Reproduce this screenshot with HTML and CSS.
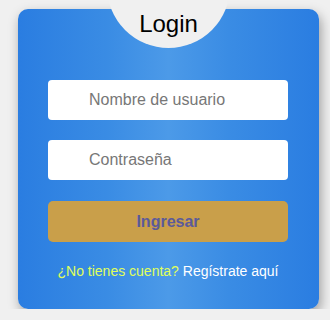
FILE: index.html
```html
<!DOCTYPE html>
<html lang="es">
<head>
<meta charset="utf-8">
<title>Login</title>
<link rel="stylesheet" href="styles.css">
</head>
<body>
<div class="card">
  <div class="badge"><h1 class="title">Login</h1></div>
  <form class="form">
    <input class="field" type="text" placeholder="Nombre de usuario">
    <input class="field" type="password" placeholder="Contraseña">
    <button class="submit" type="button">Ingresar</button>
    <p class="signup"><span class="ask">¿No tienes cuenta?</span> <a class="link" href="#">Regístrate aquí</a></p>
  </form>
</div>
</body>
</html>
```
FILE: styles.css
```css
html, body {
  margin: 0;
  padding: 0;
  background: #f0f0f0;
  font-family: "Liberation Sans", Arial, sans-serif;
  overflow: hidden;
}
.card {
  position: relative;
  box-sizing: border-box;
  width: 301px;
  height: 300px;
  margin: 9px 0 0 18px;
  border-radius: 10px;
  background: linear-gradient(to right, #2a7de1 0%, #3a8ce4 30%, #4c9ae8 50%, #3a8ce4 70%, #2a7de1 100%);
  box-shadow: 2px 5px 12px rgba(0, 0, 0, 0.35);
}
.badge {
  position: absolute;
  left: 89px;
  top: -84px;
  width: 123px;
  height: 123px;
  border-radius: 50%;
  background: #f0f0f0;
  display: flex;
  flex-direction: column;
  justify-content: flex-end;
  align-items: center;
  box-sizing: border-box;
  padding-bottom: 10px;
}
.title {
  margin: 0;
  font-size: 24px;
  font-weight: normal;
  line-height: 28px;
  color: #000;
}
.form {
  display: flex;
  flex-direction: column;
  gap: 20px;
  padding: 71px 31px 0 30px;
  margin: 0;
}
.field {
  box-sizing: border-box;
  width: 240px;
  height: 40px;
  border: none;
  border-radius: 4px;
  background: #fff;
  padding: 0 0 0 41px;
  font-family: inherit;
  font-size: 16px;
  color: #333;
  outline: none;
}
.field::placeholder {
  color: #777;
}
.submit {
  box-sizing: border-box;
  width: 240px;
  height: 41px;
  margin-top: 1px;
  border: none;
  border-radius: 5px;
  background: #c99f4a;
  color: #5b5a9a;
  font-family: inherit;
  font-size: 16px;
  font-weight: bold;
}
.signup {
  margin: 1px 0 0;
  text-align: center;
  font-size: 14px;
  line-height: 16px;
}
.ask {
  color: #e0ff5a;
}
.link {
  color: #fff;
  text-decoration: none;
}
```
